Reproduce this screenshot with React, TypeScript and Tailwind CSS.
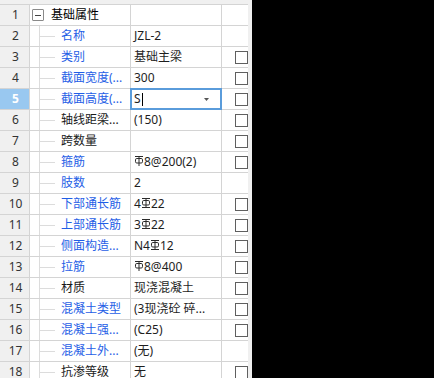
import React from 'react'

type Row = {
  name: string
  blue?: boolean
  value?: React.ReactNode
  check?: boolean
}

function Gang({ bottom }: { bottom?: boolean }) {
  return (
    <svg width="10" height="10" viewBox="0 0 10 10" className="mb-[5px] shrink-0" fill="none" stroke="#2a2a2a" strokeWidth="1">
      <line x1="1" y1="0.5" x2="9" y2="0.5" />
      <rect x="1.5" y="2.5" width="7" height="4.5" rx="1.3" />
      <line x1="5" y1="1" x2="5" y2={bottom ? 9 : 10} />
      {bottom && <line x1="1" y1="9.5" x2="9" y2="9.5" />}
    </svg>
  )
}

const rows: Row[] = [
  { name: '名称', blue: true, value: 'JZL-2' },
  { name: '类别', blue: true, value: '基础主梁', check: true },
  { name: '截面宽度(...', blue: true, value: '300', check: true },
  { name: '截面高度(...', blue: true, value: 'S', check: true },
  { name: '轴线距梁...', value: '(150)', check: true },
  { name: '跨数量', value: '', check: true },
  { name: '箍筋', blue: true, value: <><Gang />8@200(2)</>, check: true },
  { name: '肢数', blue: true, value: '2' },
  { name: '下部通长筋', blue: true, value: <>4<Gang bottom />22</>, check: true },
  { name: '上部通长筋', blue: true, value: <>3<Gang bottom />22</>, check: true },
  { name: '侧面构造...', blue: true, value: <>N4<Gang bottom />12</>, check: true },
  { name: '拉筋', blue: true, value: <><Gang />8@400</>, check: true },
  { name: '材质', value: '现浇混凝土', check: true },
  { name: '混凝土类型', blue: true, value: '(3现浇砼 碎...', check: true },
  { name: '混凝土强...', blue: true, value: '(C25)', check: true },
  { name: '混凝土外...', blue: true, value: '(无)' },
  { name: '抗渗等级', value: '无', check: true },
]

function CheckCell({ on }: { on?: boolean }) {
  return (
    <div className="w-[26px] shrink-0 flex items-center pl-[13px] overflow-hidden">
      {on && <div className="w-[13px] h-[13px] shrink-0 border border-[#5f5f5f] bg-white" />}
    </div>
  )
}

export default function App() {
  return (
    <div
      className="w-[434px] h-[378px] bg-black flex overflow-hidden text-[12px] text-[#1e1e1e]"
      style={{ fontFamily: '"Noto Sans", "Noto Sans CJK SC", sans-serif' }}
    >
      <div className="w-[252px] h-full shrink-0 bg-[#f0f0f0] flex flex-col overflow-hidden">
        <div className="h-[5px] shrink-0 w-[248px] border-b border-[#d4d4d4] bg-[#f0f0f0]" />

        {/* root row */}
        <div className="h-[21px] shrink-0 w-[248px] flex border-b border-[#d4d4d4] bg-white">
          <div className="w-[30px] shrink-0 bg-[#f0f0f0] border-r border-[#d4d4d4] flex items-center justify-center pl-[2px] text-[#333]">
            1
          </div>
          <div className="w-[101px] shrink-0 border-r border-[#d4d4d4] flex items-center pl-[2px] gap-[7px] text-black">
            <div className="w-[12px] h-[12px] border border-[#8a8a8a] rounded-[1px] flex items-center justify-center">
              <div className="w-[6px] h-px bg-[#444]" />
            </div>
            <span className="whitespace-nowrap">基础属性</span>
          </div>
          <div className="w-[91px] shrink-0 border-r border-[#d4d4d4]" />
          <CheckCell />
        </div>

        {rows.map((r, i) => {
          const n = i + 2
          const sel = n === 5
          return (
            <div key={n} className="h-[21px] shrink-0 w-[248px] flex border-b border-[#d4d4d4] bg-white">
              <div
                className={
                  sel
                    ? 'w-[30px] shrink-0 bg-[#99c8f0] border-r border-[#d4d4d4] flex items-center justify-center pl-[2px] text-white font-bold'
                    : 'w-[30px] shrink-0 bg-[#f0f0f0] border-r border-[#d4d4d4] flex items-center justify-center pl-[2px] text-[#333]'
                }
              >
                {n}
              </div>
              <div className="w-[101px] shrink-0 border-r border-[#d4d4d4] flex items-stretch overflow-hidden">
                <div className="w-[9px] shrink-0" />
                <div className="w-px shrink-0 bg-[#dcdcdc]" />
                <div className="w-[15px] shrink-0 flex items-center">
                  <div className="w-full h-px bg-[#dcdcdc]" />
                </div>
                <div className="w-[6px] shrink-0" />
                <span
                  className={
                    r.blue
                      ? 'self-center whitespace-nowrap text-[#1f5ee6]'
                      : 'self-center whitespace-nowrap text-[#1a1a1a]'
                  }
                >
                  {r.name}
                </span>
              </div>
              <div className="w-[91px] shrink-0 border-r border-[#d4d4d4] relative flex items-center pl-[3px]">
                {sel ? (
                  <div className="absolute left-[-1px] right-[-1px] top-[-1px] bottom-[-1px] border-2 border-[#5a9cdb] bg-white flex items-center pl-[2px] pr-[11px]">
                    <span>S</span>
                    <div className="w-px h-[13px] bg-black ml-px" />
                    <div className="flex-1" />
                    <svg width="5" height="3" viewBox="0 0 5 3">
                      <path d="M0 0 L5 0 L2.5 3 Z" fill="#555" />
                    </svg>
                  </div>
                ) : (
                  <div className="flex items-end whitespace-nowrap leading-[18px]">{r.value}</div>
                )}
              </div>
              <CheckCell on={r.check} />
            </div>
          )
        })}
      </div>
    </div>
  )
}
